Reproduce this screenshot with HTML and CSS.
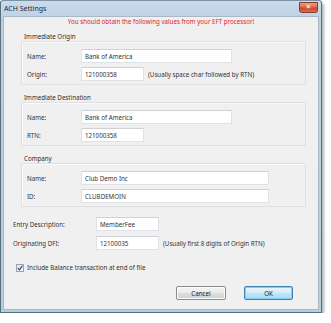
FILE: index.html
```html
<!DOCTYPE html>
<html>
<head>
<meta charset="utf-8">
<link rel="stylesheet" href="styles.css">
</head>
<body>
<div class="window">
  <div class="titlebar">
    <span class="title">ACH Settings</span>
    <div class="closebtn">✕</div>
  </div>
  <div class="client">
    <p class="notice">You should obtain the following values from your EFT processor!</p>

    <section class="group">
      <div class="group-label">Immediate Origin</div>
      <div class="group-box">
        <div class="row"><label class="glabel">Name:</label><input class="field w-name" type="text" value="Bank of America"></div>
        <div class="row"><label class="glabel">Origin:</label><input class="field w-short" type="text" value="121000358"><span class="hint">(Usually space char followed by RTN)</span></div>
      </div>
    </section>

    <section class="group">
      <div class="group-label">Immediate Destination</div>
      <div class="group-box">
        <div class="row"><label class="glabel">Name:</label><input class="field w-name" type="text" value="Bank of America"></div>
        <div class="row"><label class="glabel">RTN:</label><input class="field w-short" type="text" value="121000358"></div>
      </div>
    </section>

    <section class="group">
      <div class="group-label">Company</div>
      <div class="group-box">
        <div class="row"><label class="glabel">Name:</label><input class="field w-long" type="text" value="Club Demo Inc"></div>
        <div class="row"><label class="glabel">ID:</label><input class="field w-long" type="text" value="CLUBDEMOIN"></div>
      </div>
    </section>

    <div class="plain">
      <div class="row"><label class="olabel">Entry Description:</label><input class="field w-short" type="text" value="MemberFee"></div>
      <div class="row"><label class="olabel">Originating DFI:</label><input class="field w-short" type="text" value="12100035"><span class="hint">(Usually first 8 digits of Origin RTN)</span></div>
    </div>

    <div class="check-row">
      <span class="checkbox"><svg width="6" height="6" viewBox="0 0 6 6"><path d="M0.8 3.2 L2.4 4.9 L5.3 0.9" fill="none" stroke="#2a3f6e" stroke-width="1.1"/></svg></span>
      <span class="check-text">Include Balance transaction at end of file</span>
    </div>

    <div class="buttons">
      <button class="btn">Cancel</button>
      <button class="btn btn-default">OK</button>
    </div>
  </div>
</div>
</body>
</html>
```

FILE: styles.css
```css
html, body {
  margin: 0;
  padding: 0;
  background: #ffffff;
}

body {
  font-family: "Noto Sans", "Open Sans", sans-serif;
  font-size: 6.2px;
  color: #333;
}

.window {
  width: 322px;
  height: 313px;
  box-sizing: border-box;
  border: 1px solid #56707c;
  border-top-color: #7d93a3;
  border-radius: 3px 3px 0 0;
  background: linear-gradient(#c9dbec, #bcd0e3 20px, #b9cde0);
  box-shadow: 2px 3px 3px rgba(70, 90, 90, 0.45);
  display: flex;
  flex-direction: column;
}

.titlebar {
  height: 15px;
  display: flex;
  align-items: center;
  justify-content: space-between;
  padding: 0 3px 0 3px;
}

.title {
  font-size: 7px;
  color: #1c2733;
}

.closebtn {
  flex: none;
  width: 19px;
  height: 11px;
  box-sizing: border-box;
  margin-top: -2px;
  border: 1px solid #8a3b2b;
  border-radius: 0 0 3px 3px;
  background: #d05a3a;
  background-image: linear-gradient(#e99a82 0%, #dd6f4f 45%, #c6482c 55%, #d86f4e 100%);
  color: #ffffff;
  font-family: "DejaVu Sans", sans-serif;
  font-size: 7px;
  font-weight: bold;
  line-height: 9px;
  text-align: center;
}

.client {
  flex: 1;
  margin: 0 2px 2px 2px;
  background: #f0f0f0;
  border: 1px solid #a9b8c4;
  display: flex;
  flex-direction: column;
}

.notice {
  margin: 0;
  height: 9px;
  line-height: 9px;
  text-align: center;
  color: #e0202a;
}

.group {
  margin: 7px 12px 0 17px;
}

.group + .group {
  margin-top: 9px;
}

.group-label {
  height: 8px;
  line-height: 8px;
  padding-left: 3px;
  color: #2e2e2e;
}

.group-box {
  border: 1px solid #e0e0e0;
  box-shadow: inset 1px 1px 0 #fafafa;
  padding: 7px 0 3px 5px;
  display: flex;
  flex-direction: column;
  gap: 4px;
}

.row {
  display: flex;
  align-items: center;
  height: 14px;
}

.glabel {
  width: 54px;
  flex: none;
  color: #333;
}

.olabel {
  width: 83px;
  flex: none;
  color: #333;
}

.field {
  height: 14px;
  box-sizing: border-box;
  margin: 0;
  padding: 0 0 0 3px;
  border: 1px solid #dfe3e8;
  border-top-color: #cdd2d8;
  background: #ffffff;
  font-family: inherit;
  font-size: 6.2px;
  color: #333;
  outline: none;
}

.w-name { width: 151px; }
.w-short { width: 63px; }
.w-long { width: 188px; }

.hint {
  margin-left: 4px;
  color: #333;
}

.plain {
  margin: 10px 0 0 9px;
  display: flex;
  flex-direction: column;
  gap: 5px;
}

.check-row {
  margin: 13px 0 0 12px;
  display: flex;
  align-items: center;
  gap: 3px;
  height: 9px;
}

.checkbox {
  width: 8px;
  height: 8px;
  box-sizing: border-box;
  border: 1px solid #9aa4ae;
  background: linear-gradient(#e4e8ec, #f4f6f8);
  display: flex;
  align-items: center;
  justify-content: center;
}

.checkbox svg {
  display: block;
}

.buttons {
  margin: 14px 25px 0 0;
  display: flex;
  justify-content: flex-end;
  gap: 18px;
}

.btn {
  width: 50px;
  height: 14px;
  box-sizing: border-box;
  margin: 0;
  padding: 0;
  border: 1px solid #8a8a8a;
  border-radius: 2px;
  background: linear-gradient(#f4f4f4, #ebebeb 45%, #dcdcdc 55%, #d2d2d2);
  box-shadow: inset 0 0 0 1px #fbfbfb;
  font-family: inherit;
  font-size: 6.2px;
  color: #222;
}

.btn-default {
  width: 49px;
  border-color: #3d84b3;
  background: linear-gradient(#e8f5fc, #d6eefb 45%, #bfe4f7 55%, #a9daf3);
  box-shadow: inset 0 0 0 1px #7fd0f0;
}
```
